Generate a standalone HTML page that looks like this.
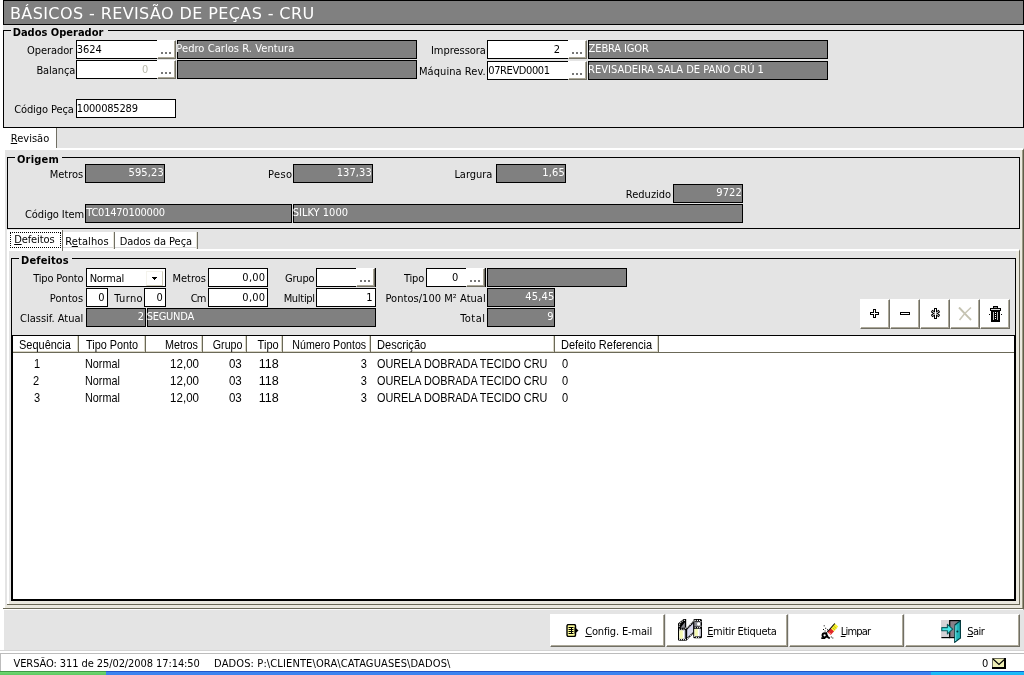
<!DOCTYPE html>
<html><head><meta charset="utf-8"><title>BÁSICOS - REVISÃO DE PEÇAS - CRU</title>
<style>html,body{margin:0;padding:0}
body{width:1024px;height:675px;overflow:hidden;background:#e4e4e4;position:relative;font-family:'DejaVu Sans Condensed','Liberation Sans',sans-serif;font-size:11px;color:#000}
#app{position:absolute;left:0;top:0;width:1024px;height:675px;will-change:transform}
#app div,#app b{position:absolute}
.x{position:absolute;line-height:20px;height:20px;white-space:pre}
.fb{font-weight:bold}
.fh{font-family:'DejaVu Sans','Liberation Sans',sans-serif;font-size:16px}
.fg{font-family:'Liberation Sans',sans-serif;font-size:12.4px}
.lstrip{left:0;top:0;width:3px;height:651px;background:#fff}
.title{left:3px;top:0;width:1019px;height:23px;border:1px solid #000;background:#808080}
.gb{border:1px solid #000}
.gbt{background:#e4e4e4;height:3px}
.inp{border:1px solid #000;background:#fff}
.ro{border:1px solid #000;background:#808080}
.btn{background:#fff;border-right:1px solid #716f64;border-bottom:1px solid #716f64;border-top:1px solid #fff;border-left:1px solid #fff;box-shadow:inset -1px -1px 0 #aca899}
.dots i{position:absolute;width:2px;height:2px;background:#777;top:11px}
.dots i:nth-child(1){left:3px}.dots i:nth-child(2){left:7px}.dots i:nth-child(3){left:11px}
.ic{position:absolute;line-height:0}
.tab{background:#fff;border-right:1px solid #716f64}
.tab.in{background:linear-gradient(#fff 15px,#dcdcdc 15px,#dcdcdc 16px,#fff 16px);box-shadow:inset -1px 0 0 #e6e4d8}
.tab .focus{border:1px dotted #000}
.page{background:#e4e4e4;border-top:2px solid #fff;border-left:5px solid #fff;box-sizing:border-box;border-right:1px solid #5f5d4a;border-bottom:1px solid #fff;box-shadow:inset -1px 0 0 #9c9a84,inset 0 -1px 0 #6b6958,inset -3px 0 0 #ebe9df,inset 0 -4px 0 #ebe9df}
.page2{background:#e4e4e4;border-top:2px solid #fff;border-left:2px solid #fff;box-sizing:border-box;border-right:1px solid #6b6958;border-bottom:1px solid #6b6958;box-shadow:inset -3px 0 0 #ebe9df,inset 0 -3px 0 #ebe9df}
.combo b{right:2px;top:2px;width:15px;height:13px;border-right:1px solid #cfccba;border-bottom:1px solid #cfccba;border-top:1px solid #f4f3ec;border-left:1px solid #f4f3ec}
.combo svg{position:absolute;left:65px;top:8px}
.grid{border:1px solid #000;background:#fff;overflow:hidden}
.gh{top:0;height:16px;border-right:1px solid #6b6958;box-shadow:inset -1px 0 0 #d8d5c6,inset 0 -1px 0 #d8d5c6}
.ghline{left:0;right:0;top:16px;height:1px;background:#6b6958}
.status{left:0;top:650px;width:1024px;height:21px;background:#fff;border-top:1px solid #d4d4d4;box-sizing:border-box}
.status:before{content:'';position:absolute;left:0;top:2px;width:1023px;height:17px;border-top:1px solid #bcbcbc;border-left:1px solid #bcbcbc}
.task{left:0;top:671px;width:1024px;height:4px;background:linear-gradient(#2456c8 0,#2456c8 1px,#3d86f2 1px,#3a80ee 4px)}
.task .start{left:0;top:0;width:106px;height:4px;background:linear-gradient(#3f9a44 0,#3f9a44 1px,#6fd872 1px,#5cc860 4px)}
.task .tray{left:931px;top:0;width:93px;height:4px;background:linear-gradient(#1858c0 0,#1858c0 1px,#1cc0fc 1px,#18b4f4 4px)}
</style></head>
<body>
<div id="app">
<div class="lstrip"></div><div class="lstrip" style="top:610px;width:4px;height:40px"></div>
<div class="title"></div>
<div class="gb" style="left:3px;top:30px;width:1019px;height:96px"></div>
<div class="gbt" style="left:11px;top:29px;width:97px"></div>
<div class="inp" style="left:76px;top:40px;width:98px;height:17px"></div>
<div class="btn dots" style="left:157px;top:40px;width:17px;height:17px"><i></i><i></i><i></i></div>
<div class="ro" style="left:177px;top:40px;width:238px;height:17px"></div>
<div class="inp" style="left:487px;top:40px;width:98px;height:17px"></div>
<div class="btn dots" style="left:568px;top:40px;width:17px;height:17px"><i></i><i></i><i></i></div>
<div class="ro" style="left:588px;top:40px;width:238px;height:17px"></div>
<div class="inp" style="left:76px;top:60px;width:98px;height:17px"></div>
<div class="btn dots" style="left:157px;top:60px;width:17px;height:17px"><i></i><i></i><i></i></div>
<div class="ro" style="left:177px;top:60px;width:238px;height:17px"></div>
<div class="inp" style="left:487px;top:61px;width:98px;height:17px"></div>
<div class="btn dots" style="left:568px;top:61px;width:17px;height:17px"><i></i><i></i><i></i></div>
<div class="ro" style="left:588px;top:61px;width:238px;height:17px"></div>
<div class="inp" style="left:76px;top:99px;width:98px;height:17px"></div>
<div class="tab" style="left:3px;top:128px;width:53px;height:21px"></div>
<div class="page" style="left:0;top:148px;width:1024px;height:462px"></div>
<div class="gb" style="left:7px;top:157px;width:1011px;height:70px"></div>
<div class="gbt" style="left:15px;top:156px;width:47px"></div>
<div class="ro" style="left:85px;top:164px;width:78px;height:17px"></div>
<div class="ro" style="left:293px;top:164px;width:78px;height:17px"></div>
<div class="ro" style="left:496px;top:164px;width:68px;height:17px"></div>
<div class="ro" style="left:673px;top:184px;width:68px;height:17px"></div>
<div class="ro" style="left:85px;top:204px;width:205px;height:17px"></div>
<div class="ro" style="left:293px;top:204px;width:448px;height:17px"></div>
<div class="page2" style="left:7px;top:249px;width:1013px;height:356px"></div>
<div class="tab" style="left:7px;top:230px;width:55px;height:21px"><b class="focus" style="left:3px;top:2px;width:49px;height:14px"></b></div>
<div class="tab in" style="left:63px;top:232px;width:51px;height:17px"></div>
<div class="tab in" style="left:115px;top:232px;width:82px;height:17px"></div>
<div style="left:3px;top:608px;width:1021px;height:1px;background:#6b6958"></div><div style="left:7px;top:604px;width:1013px;height:1px;background:#6b6958"></div>
<div class="gb" style="left:11px;top:258px;width:1003px;height:341px"></div>
<div class="gbt" style="left:19px;top:257px;width:53px"></div>
<div class="inp combo" style="left:86px;top:268px;width:78px;height:17px"><b></b><svg width="5" height="3" viewBox="0 0 5 3" shape-rendering="crispEdges"><path d="M0 0h5v1h-1v1h-1v1h-1v-1h-1v-1h-1z" fill="#000"/></svg></div>
<div class="inp" style="left:208px;top:268px;width:58px;height:17px"></div>
<div class="inp" style="left:316px;top:268px;width:58px;height:17px"></div>
<div class="btn dots" style="left:356px;top:268px;width:17px;height:17px"><i></i><i></i><i></i></div>
<div class="inp" style="left:426px;top:268px;width:58px;height:17px"></div>
<div class="btn dots" style="left:466px;top:268px;width:17px;height:17px"><i></i><i></i><i></i></div>
<div class="ro" style="left:487px;top:268px;width:138px;height:17px"></div>
<div class="inp" style="left:86px;top:288px;width:20px;height:17px"></div>
<div class="inp" style="left:144px;top:288px;width:20px;height:17px"></div>
<div class="inp" style="left:208px;top:288px;width:58px;height:17px"></div>
<div class="inp" style="left:316px;top:288px;width:58px;height:17px"></div>
<div class="ro" style="left:487px;top:288px;width:66px;height:17px"></div>
<div class="ro" style="left:86px;top:308px;width:58px;height:17px"></div>
<div class="ro" style="left:147px;top:308px;width:227px;height:17px"></div>
<div class="ro" style="left:487px;top:308px;width:66px;height:17px"></div>
<div class="btn" style="left:860px;top:299px;width:28px;height:28px"><span class="ic" style="left:9px;top:9px"><svg width="9" height="9" viewBox="0 0 9 9" shape-rendering="crispEdges"><path d="M3 0h3v3h3v3h-3v3h-3v-3h-3v-3h3z" fill="#000"/><path d="M4 1h1v3h3v1h-3v3h-1v-3h-3v-1h3z" fill="#fff"/></svg></span></div>
<div class="btn" style="left:890px;top:299px;width:28px;height:28px"><span class="ic" style="left:9px;top:12px"><svg width="10" height="3" viewBox="0 0 10 3" shape-rendering="crispEdges"><rect width="10" height="3" fill="#000"/><rect x="1" y="1" width="8" height="1" fill="#fff"/></svg></span></div>
<div class="btn" style="left:920px;top:299px;width:28px;height:28px"><span class="ic" style="left:10px;top:8px"><svg width="9" height="11" viewBox="0 0 9 11"><g fill="none" stroke-linecap="butt"><path d="M4.5 0v11M0.5 2.9l8 5.2M8.5 2.9l-8 5.2" stroke="#000" stroke-width="3"/><path d="M4.5 1v9M1.4 3.5l6.2 4M7.6 3.5l-6.2 4" stroke="#fff" stroke-width="1"/></g></svg></span></div>
<div class="btn" style="left:950px;top:299px;width:28px;height:28px"><span class="ic" style="left:7px;top:7px"><svg width="14" height="14" viewBox="0 0 14 14"><path d="M1 0.5C4 3.5 9 9 13 13" stroke="#c4c2b0" stroke-width="2" fill="none"/><path d="M13 0.5C9 4 4 9.5 1.5 13" stroke="#c8c6b6" stroke-width="1.5" fill="none"/></svg></span></div>
<div class="btn" style="left:980px;top:299px;width:28px;height:28px"><span class="ic" style="left:8px;top:6px"><svg width="13" height="16" viewBox="0 0 13 16" shape-rendering="crispEdges"><rect x="4" y="0" width="5" height="2" fill="#000"/><rect x="5" y="1" width="3" height="1" fill="#888"/><rect x="1" y="2" width="11" height="3" fill="#000"/><rect x="2" y="3" width="9" height="1" fill="#ddd"/><path d="M2 5h9l-.5 11h-8z" fill="#000"/><rect x="4" y="6" width="1" height="8" fill="#bbb"/><rect x="8" y="6" width="1" height="8" fill="#bbb"/><path d="M6.5 6v8" stroke="#fff" stroke-width="1" stroke-dasharray="1 1"/><rect x="0" y="8" width="1" height="1" fill="#000"/><rect x="12" y="8" width="1" height="1" fill="#000"/></svg></span></div>
<div class="grid" style="left:12px;top:335px;width:1001px;height:263px">
<div class="gh" style="left:0px;width:65px"></div>
<div class="gh" style="left:66px;width:66px"></div>
<div class="gh" style="left:133px;width:56px"></div>
<div class="gh" style="left:190px;width:43px"></div>
<div class="gh" style="left:234px;width:35px"></div>
<div class="gh" style="left:270px;width:87px"></div>
<div class="gh" style="left:358px;width:183px"></div>
<div class="gh" style="left:542px;width:103px"></div>
<div class="ghline"></div></div>
<div class="btn" style="left:550px;top:614px;width:113px;height:31px"><span class="ic" style="left:15px;top:9px"><svg width="13" height="13" viewBox="0 0 13 13"><rect x="1" y="0.5" width="8.5" height="12" rx="1.5" fill="#ffff9c" stroke="#000" stroke-width="1.4"/><path d="M2.5 3.5h5M2.5 5.5h5M2.5 7.5h5M2.5 9.5h5" stroke="#000" stroke-width="1"/><path d="M5.5 3v7" stroke="#000" stroke-width="1"/><path d="M8.5 3l4 3.5-4 3.5z" fill="#000"/></svg></span></div>
<div class="btn" style="left:666px;top:614px;width:120px;height:31px"><span class="ic" style="left:11px;top:4px"><svg width="24" height="22" viewBox="0 0 24 22"><path d="M0 4.6L5.6 0h2.6v9.4H0z" fill="#000"/><path d="M2.6 8.7L6.9 3.2v5.5z" fill="#8c8c94"/><path d="M0 9h8.4v11.2q0 1.5-1.5 1.5H1.5q-1.5 0-1.5-1.5z" fill="#000"/><rect x="1.1" y="11.2" width="6" height="8.6" fill="#fff"/><rect x="1.5" y="11.4" width="3.3" height="8.2" fill="#f4f8b0"/><rect x="6" y="11.2" width="1.2" height="8.6" fill="#c8c8dc"/><path d="M8 9.6L15.6 1.6V14.6L8 21.9z" fill="#000"/><path d="M9.2 10.6L15.2 4.6v8.4L9.2 18.6z" fill="#d8d8ee"/><path d="M15.2 1.6q0-1.5 1.5-1.5h5.8q1.5 0 1.5 1.5v16.2q0 1.5-1.5 1.5h-5.8q-1.5 0-1.5-1.5z" fill="#000"/><rect x="16.3" y="2.6" width="6.3" height="5" fill="#8c8c94"/><circle cx="20.7" cy="5" r="1.7" fill="#fff"/><rect x="16.3" y="9.8" width="6.3" height="7.5" fill="#fff"/><rect x="16.6" y="10" width="3.2" height="7.1" fill="#f4f8b0"/><rect x="21.4" y="9.8" width="1.2" height="7.5" fill="#c8c8dc"/><g fill="#fff"><circle cx="1.6" cy="10.2" r=".62"/><circle cx="3.7" cy="10.2" r=".62"/><circle cx="5.9" cy="10.2" r=".62"/><circle cx="1.6" cy="20.6" r=".62"/><circle cx="3.5" cy="20.6" r=".62"/><circle cx="5.6" cy="20.6" r=".62"/><circle cx="7.5" cy="20.3" r=".62"/><circle cx="1.6" cy="5.2" r=".62"/><circle cx="2.8" cy="3.6" r=".62"/><circle cx="4.2" cy="2.1" r=".62"/><circle cx="6.4" cy="1.3" r=".62"/><circle cx="1.3" cy="7.2" r=".62"/><circle cx="7.6" cy="9.2" r=".62"/><circle cx="9.7" cy="8.1" r=".62"/><circle cx="10.9" cy="6.9" r=".62"/><circle cx="12.3" cy="5.3" r=".62"/><circle cx="13.9" cy="3.8" r=".62"/><circle cx="9.6" cy="19.3" r=".62"/><circle cx="10.9" cy="18.2" r=".62"/><circle cx="12.3" cy="16.6" r=".62"/><circle cx="13.9" cy="15" r=".62"/><circle cx="17.2" cy="1.4" r=".62"/><circle cx="19.4" cy="1.4" r=".62"/><circle cx="21.5" cy="1.4" r=".62"/><circle cx="22.9" cy="2.7" r=".62"/><circle cx="17.2" cy="8.6" r=".62"/><circle cx="19.6" cy="8.6" r=".62"/><circle cx="21.5" cy="8.6" r=".62"/><circle cx="18.4" cy="18.3" r=".62"/><circle cx="20.6" cy="18.3" r=".62"/><circle cx="15.9" cy="1.9" r=".62"/><circle cx="22.9" cy="7.2" r=".62"/><circle cx="16.2" cy="17.3" r=".62"/></g></svg></span></div>
<div class="btn" style="left:789px;top:614px;width:113px;height:31px"><span class="ic" style="left:31px;top:8px"><svg width="18" height="16" viewBox="0 0 18 16"><path d="M6.3 9L9.7 5.2l3.4 3L9.7 12z" fill="#e02828"/><path d="M9.7 5.2L13.8 0.5l3.4 3-4.1 4.7z" fill="#f4f030"/><path d="M6.3 9L13.8 0.5" stroke="#000" stroke-width="1.1" fill="none"/><path d="M11.5 4.6l2.6 2.3M12.8 3.2l2.6 2.3" stroke="#b8a800" stroke-width=".7"/><path d="M7.8 9.2l2.2 2" stroke="#ff9a9a" stroke-width="1"/><circle cx="3.6" cy="12.3" r="2.1" fill="none" stroke="#000" stroke-width="1.9"/><path d="M0.3 15.2h4M5.8 9.5L4.6 11M6 12.2c.2 1.8 1.2 2.8 2.8 3" stroke="#000" stroke-width="1.7" fill="none"/><path d="M3.2 2.3v1M4.7 4.8v1M2 6.5h1M3.6 8h1M9.8 14h1M11.3 15h1M6 6.8h1" stroke="#000" stroke-width="1"/></svg></span></div>
<div class="btn" style="left:905px;top:614px;width:113px;height:31px"><span class="ic" style="left:35px;top:5px"><svg width="21" height="23" viewBox="0 0 21 23"><rect x="0" y="0" width="9.5" height="17.6" fill="#d6d2d6"/><rect x="8.7" y="0.6" width="10.6" height="17" fill="#8a8088" stroke="#000" stroke-width="1.2"/><path d="M0.4 17.6h8.4" stroke="#000" stroke-width="1.2"/><path d="M14 4.7L19.2 0.8l.3 17.2-5.8 4.3z" fill="#22b4b8" stroke="#003c40" stroke-width="1.1"/><path d="M14.9 5.4l-.3 15.6" stroke="#7ff0f0" stroke-width=".9"/><circle cx="16.4" cy="11.4" r="1" fill="#003038"/><path d="M0.8 7.6h5.6V4.3l5.3 4.8-5.3 4.8v-3.2H0.8z" fill="#48e8e8" stroke="#0c5c60" stroke-width="1.1" stroke-linejoin="round"/></svg></span></div>
<div class="status"><svg style="position:absolute;left:992px;top:7px" width="14" height="11" viewBox="0 0 14 11"><rect x="0" y="0" width="14" height="11" fill="#000"/><rect x="0" y="0" width="12" height="9" fill="#6a6a58"/><rect x="1" y="1" width="11" height="8" fill="#f0f0b6"/><path d="M1 1l6 5.4 6-5.4" fill="none" stroke="#000" stroke-width="1.1"/></svg></div>
<div class="task"><div class="start"></div><div class="tray"></div></div>
<span id="title" class="x fh" style="top:4px;left:9.99px;letter-spacing:0.398px;color:#fff;">BÁSICOS - REVISÃO DE PEÇAS - CRU</span>
<span id="g1" class="x fb" style="top:23px;left:12.73px;">Dados Operador</span>
<span id="l_oper" class="x ft" style="top:41px;right:950.92px;letter-spacing:-0.089px;">Operador</span>
<span id="v_oper" class="x ft" style="top:40px;left:76.87px;letter-spacing:-0.118px;">3624</span>
<span id="v_opern" class="x ft" style="top:39px;left:176.33px;letter-spacing:0.066px;color:#fff;">Pedro Carlos R. Ventura</span>
<span id="l_impr" class="x ft" style="top:41px;right:538.14px;letter-spacing:-0.027px;">Impressora</span>
<span id="v_impr" class="x ft" style="top:40px;right:463.92px;">2</span>
<span id="v_imprn" class="x ft" style="top:39px;left:588.62px;letter-spacing:-0.128px;color:#fff;">ZEBRA IGOR</span>
<span id="l_bal" class="x ft" style="top:61px;right:948.71px;letter-spacing:-0.075px;">Balança</span>
<span id="v_bal" class="x ft" style="top:60px;right:875.82px;color:#b8b8aa;">0</span>
<span id="l_maq" class="x ft" style="top:62px;right:538.36px;letter-spacing:0.051px;">Máquina Rev.</span>
<span id="v_maq" class="x ft" style="top:61px;left:488.3px;letter-spacing:-0.399px;">07REVD0001</span>
<span id="v_maqn" class="x ft" style="top:60px;left:588.12px;letter-spacing:-0.006px;color:#fff;">REVISADEIRA SALA DE PANO CRÚ 1</span>
<span id="l_cod" class="x ft" style="top:100px;right:950.3px;letter-spacing:-0.103px;">Código Peça</span>
<span id="v_cod" class="x ft" style="top:99px;left:76.84px;letter-spacing:-0.205px;">1000085289</span>
<span id="tab0" class="x ft" style="top:129px;left:10.73px;letter-spacing:0.026px;"><u>R</u>evisão</span>
<span id="g2" class="x fb" style="top:150px;left:17.0px;letter-spacing:0.181px;">Origem</span>
<span id="l_met" class="x ft" style="top:165px;right:941.01px;letter-spacing:-0.058px;">Metros</span>
<span id="v_met" class="x ft" style="top:163px;right:860.13px;letter-spacing:0.117px;color:#fff;">595,23</span>
<span id="l_peso" class="x ft" style="top:165px;right:731.43px;letter-spacing:0.406px;">Peso</span>
<span id="v_peso" class="x ft" style="top:163px;right:652.22px;letter-spacing:0.073px;color:#fff;">137,33</span>
<span id="l_larg" class="x ft" style="top:165px;right:531.7px;letter-spacing:-0.03px;">Largura</span>
<span id="v_larg" class="x ft" style="top:163px;right:459.03px;letter-spacing:0.199px;color:#fff;">1,65</span>
<span id="l_red" class="x ft" style="top:185px;right:352.83px;">Reduzido</span>
<span id="v_red" class="x ft" style="top:183px;right:282.26px;letter-spacing:0.061px;color:#fff;">9722</span>
<span id="l_item" class="x ft" style="top:205px;right:940.03px;letter-spacing:-0.098px;">Código Item</span>
<span id="v_item" class="x ft" style="top:203px;left:86.27px;letter-spacing:-0.232px;color:#fff;">TC01470100000</span>
<span id="v_itemn" class="x ft" style="top:203px;left:292.63px;letter-spacing:0.029px;color:#fff;">SILKY 1000</span>
<span id="tab1" class="x ft" style="top:230px;left:14.15px;letter-spacing:-0.08px;"><u>D</u>efeitos</span>
<span id="tab2" class="x ft" style="top:232px;left:65.28px;letter-spacing:0.094px;">R<u>e</u>talhos</span>
<span id="tab3" class="x ft" style="top:232px;left:119.65px;letter-spacing:-0.044px;">Dados da Peça</span>
<span id="g3" class="x fb" style="top:251px;left:21.11px;letter-spacing:0.095px;">Defeitos</span>
<span id="l_tp" class="x ft" style="top:269px;right:940.66px;letter-spacing:-0.167px;">Tipo Ponto</span>
<span id="v_tp" class="x ft" style="top:269px;left:89.74px;letter-spacing:-0.269px;">Normal</span>
<span id="l_met2" class="x ft" style="top:269px;right:818.01px;letter-spacing:0.01px;">Metros</span>
<span id="v_met2" class="x ft" style="top:268px;right:758.58px;letter-spacing:0.261px;">0,00</span>
<span id="l_grp" class="x ft" style="top:269px;right:709.52px;letter-spacing:-0.164px;">Grupo</span>
<span id="l_tipo" class="x ft" style="top:269px;right:600.02px;letter-spacing:-0.218px;">Tipo</span>
<span id="v_tipo" class="x ft" style="top:268px;right:565.61px;">0</span>
<span id="l_pts" class="x ft" style="top:289px;right:940.82px;letter-spacing:0.07px;">Pontos</span>
<span id="v_pts" class="x ft" style="top:288px;right:919.57px;">0</span>
<span id="l_tur" class="x ft" style="top:289px;right:881.1px;letter-spacing:0.349px;">Turno</span>
<span id="v_tur" class="x ft" style="top:288px;right:861.24px;">0</span>
<span id="l_cm" class="x ft" style="top:289px;right:818.32px;letter-spacing:-0.756px;">Cm</span>
<span id="v_cm" class="x ft" style="top:288px;right:758.58px;letter-spacing:0.261px;">0,00</span>
<span id="l_mul" class="x ft" style="top:289px;right:709.2px;letter-spacing:-0.293px;">Multipl</span>
<span id="v_mul" class="x ft" style="top:288px;right:651.46px;">1</span>
<span id="l_p100" class="x ft" style="top:289px;right:538.24px;letter-spacing:0.039px;">Pontos/100 M² Atual</span>
<span id="v_p100" class="x ft" style="top:287px;right:469.56px;letter-spacing:0.192px;color:#fff;">45,45</span>
<span id="l_cla" class="x ft" style="top:309px;right:940.7px;">Classif. Atual</span>
<span id="v_cla" class="x ft" style="top:307px;right:879.95px;color:#fff;">2</span>
<span id="v_clan" class="x ft" style="top:307px;left:146.63px;letter-spacing:-0.253px;color:#fff;">SEGUNDA</span>
<span id="l_tot" class="x ft" style="top:309px;right:538.47px;letter-spacing:0.492px;">Total</span>
<span id="v_tot" class="x ft" style="top:307px;right:470.44px;color:#fff;">9</span>
<span id="gh0" class="x fg" style="top:335px;left:19.01px;transform:scaleX(0.8864);transform-origin:0 0;">Sequência</span>
<span id="gh1" class="x fg" style="top:335px;left:86.37px;transform:scaleX(0.8756);transform-origin:0 0;">Tipo Ponto</span>
<span id="gh2" class="x fg" style="top:335px;right:826.04px;transform:scaleX(0.8703);transform-origin:100% 0;">Metros</span>
<span id="gh3" class="x fg" style="top:335px;right:781.74px;transform:scaleX(0.86);transform-origin:100% 0;">Grupo</span>
<span id="gh4" class="x fg" style="top:335px;right:745.74px;transform:scaleX(0.89);transform-origin:100% 0;">Tipo</span>
<span id="gh5" class="x fg" style="top:335px;right:657.81px;transform:scaleX(0.8564);transform-origin:100% 0;">Número Pontos</span>
<span id="gh6" class="x fg" style="top:335px;left:377.01px;transform:scaleX(0.8932);transform-origin:0 0;">Descrição</span>
<span id="gh7" class="x fg" style="top:335px;left:560.86px;transform:scaleX(0.8868);transform-origin:0 0;">Defeito Referencia</span>
<span id="gd0_0" class="x fg" style="top:354px;left:33.6px;transform:scaleX(0.89);transform-origin:0 0;">1</span>
<span id="gd0_1" class="x fg" style="top:354px;left:85.01px;transform:scaleX(0.8709);transform-origin:0 0;">Normal</span>
<span id="gd0_2" class="x fg" style="top:354px;right:825.29px;transform:scaleX(0.9325);transform-origin:100% 0;">12,00</span>
<span id="gd0_3" class="x fg" style="top:354px;right:782.15px;transform:scaleX(0.9304);transform-origin:100% 0;">03</span>
<span id="gd0_4" class="x fg" style="top:354px;right:744.89px;transform:scaleX(1.015);transform-origin:100% 0;">118</span>
<span id="gd0_5" class="x fg" style="top:354px;right:657.45px;transform:scaleX(0.89);transform-origin:100% 0;">3</span>
<span id="gd0_6" class="x fg" style="top:354px;left:377.49px;transform:scaleX(0.875);transform-origin:0 0;">OURELA DOBRADA TECIDO CRU</span>
<span id="gd0_7" class="x fg" style="top:354px;left:562.34px;transform:scaleX(0.89);transform-origin:0 0;">0</span>
<span id="gd1_0" class="x fg" style="top:371px;left:33.41px;transform:scaleX(0.89);transform-origin:0 0;">2</span>
<span id="gd1_1" class="x fg" style="top:371px;left:85.01px;transform:scaleX(0.8709);transform-origin:0 0;">Normal</span>
<span id="gd1_2" class="x fg" style="top:371px;right:825.29px;transform:scaleX(0.9325);transform-origin:100% 0;">12,00</span>
<span id="gd1_3" class="x fg" style="top:371px;right:782.15px;transform:scaleX(0.9304);transform-origin:100% 0;">03</span>
<span id="gd1_4" class="x fg" style="top:371px;right:744.89px;transform:scaleX(1.015);transform-origin:100% 0;">118</span>
<span id="gd1_5" class="x fg" style="top:371px;right:657.45px;transform:scaleX(0.89);transform-origin:100% 0;">3</span>
<span id="gd1_6" class="x fg" style="top:371px;left:377.49px;transform:scaleX(0.875);transform-origin:0 0;">OURELA DOBRADA TECIDO CRU</span>
<span id="gd1_7" class="x fg" style="top:371px;left:562.34px;transform:scaleX(0.89);transform-origin:0 0;">0</span>
<span id="gd2_0" class="x fg" style="top:388px;left:33.66px;transform:scaleX(0.89);transform-origin:0 0;">3</span>
<span id="gd2_1" class="x fg" style="top:388px;left:85.01px;transform:scaleX(0.8709);transform-origin:0 0;">Normal</span>
<span id="gd2_2" class="x fg" style="top:388px;right:825.29px;transform:scaleX(0.9325);transform-origin:100% 0;">12,00</span>
<span id="gd2_3" class="x fg" style="top:388px;right:782.15px;transform:scaleX(0.9304);transform-origin:100% 0;">03</span>
<span id="gd2_4" class="x fg" style="top:388px;right:744.89px;transform:scaleX(1.015);transform-origin:100% 0;">118</span>
<span id="gd2_5" class="x fg" style="top:388px;right:657.45px;transform:scaleX(0.89);transform-origin:100% 0;">3</span>
<span id="gd2_6" class="x fg" style="top:388px;left:377.49px;transform:scaleX(0.875);transform-origin:0 0;">OURELA DOBRADA TECIDO CRU</span>
<span id="gd2_7" class="x fg" style="top:388px;left:562.34px;transform:scaleX(0.89);transform-origin:0 0;">0</span>
<span id="b_cfg" class="x ft" style="top:622px;left:585.23px;letter-spacing:-0.164px;"><u>C</u>onfig. E-mail</span>
<span id="b_emi" class="x ft" style="top:622px;left:707.15px;letter-spacing:-0.301px;"><u>E</u>mitir Etiqueta</span>
<span id="b_lim" class="x ft" style="top:622px;left:840.73px;letter-spacing:-0.78px;"><u>L</u>impar</span>
<span id="b_sai" class="x ft" style="top:622px;left:967.24px;letter-spacing:-0.528px;"><u>S</u>air</span>
<span id="s_ver" class="x ft" style="top:654px;left:13.5px;letter-spacing:-0.086px;">VERSÃO: 311 de 25/02/2008 17:14:50</span>
<span id="s_dad" class="x ft" style="top:654px;left:214.08px;letter-spacing:0.124px;">DADOS: P:\CLIENTE\ORA\CATAGUASES\DADOS\</span>
<span id="s_0" class="x ft" style="top:654px;left:982.07px;">0</span>
</div>
</body></html>
